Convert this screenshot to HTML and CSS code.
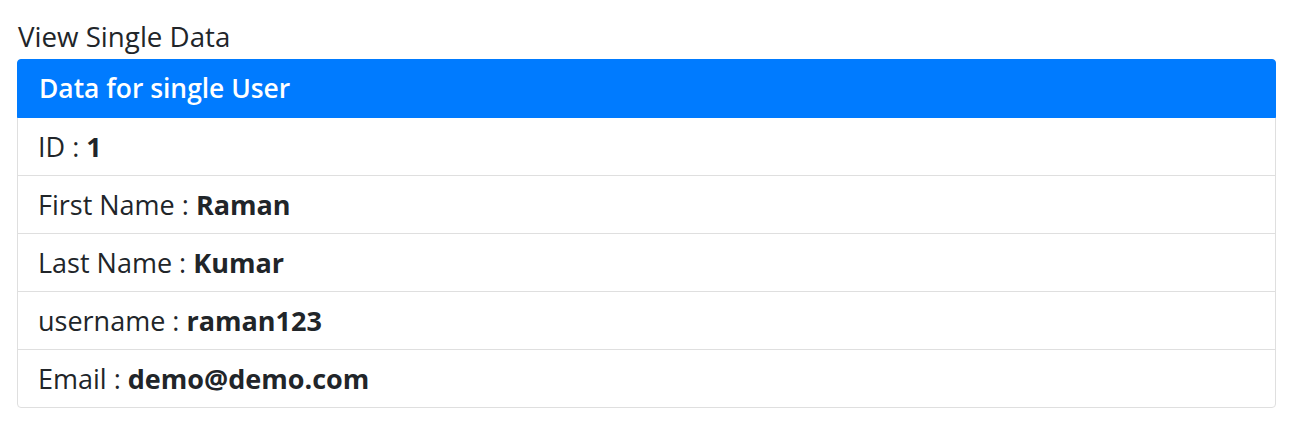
FILE: index.html
```html
<!DOCTYPE html>
<html lang="en">
<head>
    <meta charset="UTF-8">
    <meta name="viewport" content="width=device-width, initial-scale=1.0">
    <title>View Single Data</title>
    <link rel="stylesheet" href="styles.css">
</head>
<body>

    <div class="page">
        <h3 class="title">View Single Data</h3>

        <ul class="list-group">
            <li class="list-item active">Data for single User</li>
            <li class="list-item">ID : <strong>1</strong></li>
            <li class="list-item">First Name : <strong>Raman</strong></li>
            <li class="list-item">Last Name : <strong>Kumar</strong></li>
            <li class="list-item">username : <strong>raman123</strong></li>
            <li class="list-item">Email : <strong>demo@demo.com</strong></li>
        </ul>
    </div>

</body>
</html>
```

FILE: styles.css
```css
body {
    font-family: "Open Sans", "Noto Sans", Arial, sans-serif;
    margin: 0;
    color: #212529;
    background-color: #fff;
}
.page {
    padding: 20px 20px 0 17px;
}
.title {
    font-size: 27.7px;
    font-weight: 500;
    line-height: 33px;
    margin: 0 0 6px 1px;
}
.list-group {
    list-style: none;
    margin: 0;
    padding: 0;
    border: 1px solid #dfdfdf;
    border-radius: 4px;
}
.list-item {
    font-size: 27px;
    line-height: 33px;
    padding: 12px 20px;
    border-top: 1px solid #dfdfdf;
}
.list-item:nth-child(2) {
    border-top: 0;
}
.list-item.active {
    background-color: #007bff;
    color: #fff;
    font-size: 26.4px;
    font-weight: 600;
    border: 1px solid #007bff;
    margin: -1px -1px 0;
    padding: 12px 21px;
    border-radius: 4px 4px 0 0;
}
.list-item strong {
    font-weight: 700;
}
```
